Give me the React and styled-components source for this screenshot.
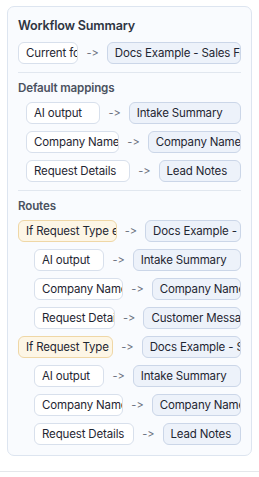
import styled, { createGlobalStyle } from 'styled-components';

const GlobalStyle = createGlobalStyle`
  html, body {
    margin: 0;
    padding: 0;
    background: #ffffff;
    font-family: Inter, 'Noto Sans', sans-serif;
    font-feature-settings: 'calt' 0, 'liga' 0;
    font-variant-ligatures: none;
    -webkit-font-smoothing: antialiased;
  }
`;

const summary = {
  form: { from: 'Current form', to: 'Docs Example - Sales Form Intake' },
  defaults: [
    { from: 'AI output', to: 'Intake Summary' },
    { from: 'Company Name', to: 'Company Name' },
    { from: 'Request Details', to: 'Lead Notes' },
  ],
  routes: [
    {
      when: 'If Request Type equals Demo',
      to: 'Docs Example - Sales Demo',
      mappings: [
        { from: 'AI output', to: 'Intake Summary' },
        { from: 'Company Name', to: 'Company Name' },
        { from: 'Request Details', to: 'Customer Message' },
      ],
    },
    {
      when: 'If Request Type equals Sales',
      to: 'Docs Example - Sales Pipeline',
      mappings: [
        { from: 'AI output', to: 'Intake Summary' },
        { from: 'Company Name', to: 'Company Name' },
        { from: 'Request Details', to: 'Lead Notes' },
      ],
    },
  ],
};

function App() {
  return (
    <>
      <GlobalStyle />
      <Page>
        <Card>
          <Title>Workflow Summary</Title>
          <Row>
            <Pill>{summary.form.from}</Pill>
            <Arrow>-&gt;</Arrow>
            <Pill $kind='target'>{summary.form.to}</Pill>
          </Row>

          <Section>
            <Label>Default mappings</Label>
            {summary.defaults.map((m, i) => (
              <Row key={i} $indent={8}>
                <Pill>{m.from}</Pill>
                <Arrow>-&gt;</Arrow>
                <Pill $kind='target'>{m.to}</Pill>
              </Row>
            ))}
          </Section>

          <Section>
            <Label>Routes</Label>
            {summary.routes.map((r, i) => (
              <RouteGroup key={i}>
                <Row>
                  <Pill $kind='condition'>{r.when}</Pill>
                  <Arrow>-&gt;</Arrow>
                  <Pill $kind='target'>{r.to}</Pill>
                </Row>
                {r.mappings.map((m, j) => (
                  <Row key={j} $indent={16}>
                    <Pill>{m.from}</Pill>
                    <Arrow>-&gt;</Arrow>
                    <Pill $kind='target'>{m.to}</Pill>
                  </Row>
                ))}
              </RouteGroup>
            ))}
          </Section>
        </Card>
        <Footer />
      </Page>
    </>
  );
}

const Page = styled.div`
  min-height: 477px;
  display: flex;
  flex-direction: column;
  padding-top: 6px;
  box-sizing: border-box;
`;

const Card = styled.div`
  margin: 0 7px;
  padding: 10px;
  border: 1px solid #dde5f0;
  border-radius: 7px;
  background: #f9fbfe;
  display: flex;
  flex-direction: column;
  gap: 7px;
`;

const Title = styled.div`
  font-size: 12.6px;
  line-height: 18px;
  font-weight: 600;
  letter-spacing: -0.2px;
  color: #2f3542;
`;

const Section = styled.div`
  display: flex;
  flex-direction: column;
  gap: 7px;
  border-top: 1px solid #e1e7ef;
  padding-top: 8px;
  margin-top: 1px;
`;

const Label = styled.div`
  font-size: 11.6px;
  line-height: 14px;
  font-weight: 600;
  letter-spacing: -0.15px;
  color: #4b5260;
`;

const RouteGroup = styled.div`
  display: flex;
  flex-direction: column;
  gap: 7px;
`;

const Row = styled.div`
  display: flex;
  align-items: center;
  gap: 8px;
  padding-left: ${(p) => p.$indent || 0}px;
`;

const pillColors = {
  source: { bg: '#ffffff', border: '#d8e0ec' },
  target: { bg: '#edf2fa', border: '#cbd6e8' },
  condition: { bg: '#fdf6e6', border: '#efd7a6' },
};

const Pill = styled.div`
  flex: 1 1 auto;
  min-width: 0;
  overflow: hidden;
  white-space: nowrap;
  padding: 3px 7px;
  font-size: 11.5px;
  line-height: 14px;
  letter-spacing: -0.15px;
  color: #1f2632;
  border-radius: 6px;
  background: ${(p) => pillColors[p.$kind || 'source'].bg};
  border: 1px solid ${(p) => pillColors[p.$kind || 'source'].border};
`;

const Arrow = styled.span`
  flex: none;
  font-size: 11px;
  color: #6b7280;
`;

const Footer = styled.div`
  margin-top: 15px;
  flex: 1;
  border-top: 1px solid #e5e7eb;
`;

export default App;
